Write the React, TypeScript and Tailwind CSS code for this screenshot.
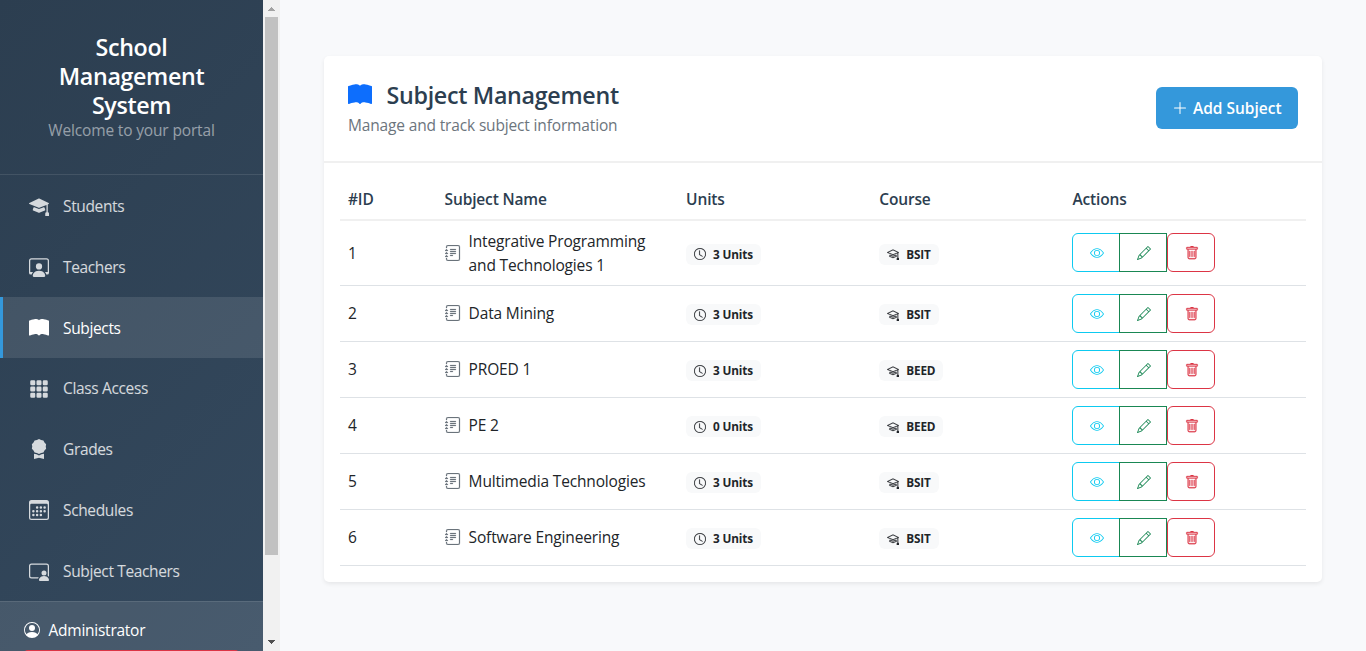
import type { IconType } from 'react-icons'
import {
  BsAwardFill,
  BsBookFill,
  BsCalendar3,
  BsClock,
  BsEye,
  BsGrid3X3GapFill,
  BsJournalText,
  BsMortarboard,
  BsMortarboardFill,
  BsPencil,
  BsPersonCircle,
  BsPersonVideo3,
  BsPersonWorkspace,
  BsPlusLg,
  BsTrash,
} from 'react-icons/bs'

const navItems: { label: string; icon: IconType; active?: boolean }[] = [
  { label: 'Students', icon: BsMortarboardFill },
  { label: 'Teachers', icon: BsPersonWorkspace },
  { label: 'Subjects', icon: BsBookFill, active: true },
  { label: 'Class Access', icon: BsGrid3X3GapFill },
  { label: 'Grades', icon: BsAwardFill },
  { label: 'Schedules', icon: BsCalendar3 },
  { label: 'Subject Teachers', icon: BsPersonVideo3 },
]

const subjects = [
  { id: 1, name: 'Integrative Programming and Technologies 1', units: 3, course: 'BSIT' },
  { id: 2, name: 'Data Mining', units: 3, course: 'BSIT' },
  { id: 3, name: 'PROED 1', units: 3, course: 'BEED' },
  { id: 4, name: 'PE 2', units: 0, course: 'BEED' },
  { id: 5, name: 'Multimedia Technologies', units: 3, course: 'BSIT' },
  { id: 6, name: 'Software Engineering', units: 3, course: 'BSIT' },
]

const columns = 'grid grid-cols-[10%_25%_20%_20%_25%]'

function Scrollbar() {
  return (
    <div className="flex w-[17px] shrink-0 flex-col items-center bg-[#f1f1f1]">
      <svg className="h-[17px] w-[17px] shrink-0" viewBox="0 0 17 17" shapeRendering="crispEdges">
        <path d="M8 7h1v1h1v1h1v1h1v1H5v-1h1V9h1V8h1z" fill="#a3a3a3" />
      </svg>
      <div className="h-[538px] w-[13px] bg-[#c1c1c1]" />
      <svg className="mt-auto h-[17px] w-[17px] shrink-0" viewBox="0 0 17 17" shapeRendering="crispEdges">
        <path d="M5 6h7v1h-1v1h-1v1H9v1H8V9H7V8H6V7H5z" fill="#505050" />
      </svg>
    </div>
  )
}

function Sidebar() {
  return (
    <aside className="flex h-full w-[280px] shrink-0">
      <div className="flex w-[263px] flex-col overflow-hidden bg-linear-135 from-[#2c3e50] to-[#34495e]">
        <header className="h-[175.4px] shrink-0 border-b border-white/10 px-6 pt-[33px] text-center">
          <h3 className="text-[23.25px] leading-[28.8px] font-semibold tracking-[-0.35px] text-white">
            School Management System
          </h3>
          <p className="-mt-px leading-6 text-white/50">Welcome to your portal</p>
        </header>
        <nav className="flex-1 tracking-[-0.023em]">
          {navItems.map(({ label, icon: Icon, active }) => (
            <a
              key={label}
              className={
                active
                  ? 'flex h-[60.8px] items-center border-l-3 border-[#3498db] bg-white/10 pl-6 text-white'
                  : 'flex h-[60.8px] items-center border-l-3 border-transparent pl-6 text-white/80'
              }
            >
              <span className="mt-px mr-3 flex w-6 justify-center">
                <Icon className="size-5" />
              </span>
              <span className="pt-[1.5px]">{label}</span>
            </a>
          ))}
        </nav>
        <footer className="h-[50px] shrink-0 overflow-hidden border-t border-white/10 bg-white/10 px-6 pt-4">
          <div className="flex h-6 items-center gap-[8.5px] text-white">
            <BsPersonCircle className="size-4" />
            <span className="pt-px tracking-[-0.016em]">Administrator</span>
          </div>
          <div className="mt-2 h-9 rounded-[4px] bg-[#dc3545]" />
        </footer>
      </div>
      <Scrollbar />
    </aside>
  )
}

function Badge({ icon: Icon, text }: { icon: IconType; text: string }) {
  return (
    <span className="mt-[2.8px] flex h-[21px] items-center rounded-md bg-[#f8f9fa] px-2 text-[11.75px] font-bold text-[#212529]">
      <Icon className="mr-[7px] size-3 stroke-[0.2]" />
      {text}
    </span>
  )
}

function Actions() {
  return (
    <div className="-mt-[0.25px] mb-[0.25px] flex h-[39px]">
      <button className="flex w-[48px] items-center justify-center rounded-l-md border border-[#0dcaf0] pt-px pl-px text-[#0dcaf0]">
        <BsEye className="size-3.5" />
      </button>
      <button className="-ml-px flex w-[48px] items-center justify-center border border-[#198754] pt-px pl-px text-[#198754]">
        <BsPencil className="size-3.5" />
      </button>
      <button className="flex w-[48px] items-center justify-center rounded-md border border-[#dc3545] pt-px pl-px text-[#dc3545]">
        <BsTrash className="size-3.5 stroke-[0.3]" />
      </button>
    </div>
  )
}

export default function App() {
  return (
    <div className="flex h-[651px] w-[1366px] overflow-hidden bg-[#f8f9fb] font-['Open_Sans','Noto_Sans',sans-serif] text-[15.5px] tracking-[-0.01em] text-[#212529]">
      <Sidebar />
      <main className="flex-1 pt-14 pr-11 pl-11">
        <section className="rounded-[5px] bg-white shadow-[0_2px_4px_rgba(0,0,0,0.075)]">
          <header className="flex h-[107px] items-center justify-between border-b-2 border-[#f0f0f0] px-6">
            <div>
              <h2 className="mb-1 flex h-[28.8px] items-center pt-[2px] text-[23.25px] font-semibold tracking-[-0.3px] text-[#2c3e50]">
                <BsBookFill className="mr-[14.5px] size-6 text-[#0d6efd]" />
                Subject Management
              </h2>
              <p className="leading-6 text-[#6c757d]">Manage and track subject information</p>
            </div>
            <button className="mb-[1.5px] flex h-[42px] w-[142px] items-center justify-center gap-[4.5px] rounded-md bg-[#3498db] font-semibold tracking-normal text-white">
              <BsPlusLg className="size-4" />
              <span className="pt-[1.5px]">Add Subject</span>
            </button>
          </header>
          <div className="p-4">
            <div className={`${columns} h-[42px] border-b-2 border-[#f0f0f0] pt-2 leading-6 font-semibold text-[#2c3e50]`}>
              <span className="pl-2">#ID</span>
              <span className="pl-2">Subject Name</span>
              <span className="pl-2">Units</span>
              <span className="pl-2">Course</span>
              <span className="pl-2">Actions</span>
            </div>
            {subjects.map((s) => (
              <div key={s.id} className={`${columns} items-center border-b border-[#dee2e6] py-2`}>
                <span className="mt-[0.3px] -mb-[0.3px] pl-2">{s.id}</span>
                <div className="-mt-[0.5px] mb-[0.5px] flex items-center gap-2 px-2 leading-6">
                  <BsJournalText className="size-4 shrink-0 text-[#6c757d] stroke-[0.2]" />
                  <span>{s.name}</span>
                </div>
                <div className="flex pl-2">
                  <Badge icon={BsClock} text={`${s.units} Units`} />
                </div>
                <div className="flex pl-2">
                  <Badge icon={BsMortarboard} text={s.course} />
                </div>
                <div className="pl-2">
                  <Actions />
                </div>
              </div>
            ))}
          </div>
        </section>
      </main>
    </div>
  )
}
